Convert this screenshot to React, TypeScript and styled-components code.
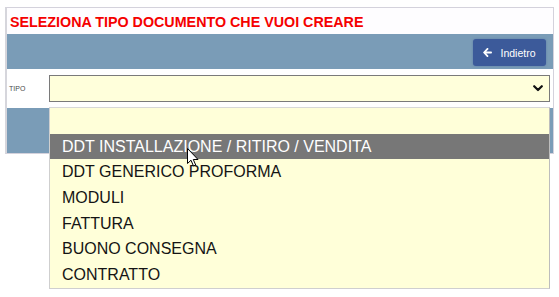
import React from "react";
import styled, { createGlobalStyle } from "styled-components";

const Global = createGlobalStyle`
  html, body { margin: 0; padding: 0; background: #ffffff; }
  body { font-family: "Liberation Sans", Arial, sans-serif; }
  * { box-sizing: border-box; }
`;

const Page = styled.div`
  position: relative;
  min-height: 297px;
  padding: 7px 5px 0 5px;
`;

const Panel = styled.div`
  position: relative;
  border: 1px solid #d4d2dc;
  border-left: 2px solid #d6d6dc;
  display: flex;
  flex-direction: column;
`;

const TitleRow = styled.div`
  height: 26px;
  display: flex;
  align-items: center;
  padding-left: 3px;
  padding-top: 2px;
  background: #fefdff;
`;

const Title = styled.h1`
  margin: 0;
  font-size: 14.3px;
  font-weight: bold;
  color: #f50000;
`;

const Toolbar = styled.div`
  height: 35px;
  background: #7a9cb7;
  display: flex;
  align-items: center;
  justify-content: flex-end;
  padding-right: 7px;
`;

const BackButton = styled.button`
  height: 27px;
  width: 73px;
  border: none;
  border-radius: 3px;
  background: #3c5a9a;
  color: #ffffff;
  font-family: "Liberation Sans", Arial, sans-serif;
  font-size: 10.5px;
  display: flex;
  align-items: center;
  justify-content: center;
  gap: 8px;
  padding: 0;
  margin-top: 2px;
  box-shadow: 0 0 2px rgba(60, 90, 154, 0.5);
`;

const FormRow = styled.div`
  height: 39px;
  background: #ffffff;
  display: flex;
  align-items: center;
  padding-right: 3px;
`;

const Label = styled.span`
  width: 42px;
  padding-left: 2px;
  font-size: 7px;
  color: #4a4a4a;
`;

const SelectWrap = styled.div`
  position: relative;
  flex: 1;
`;

const SelectBox = styled.div`
  height: 27px;
  border: 1px solid #7a7a7a;
  background: #ffffdb;
  display: flex;
  align-items: center;
  justify-content: flex-end;
  padding-right: 6px;
`;

const DropList = styled.ul`
  position: absolute;
  top: 32px;
  left: 0;
  right: 0;
  margin: 0;
  padding: 0;
  list-style: none;
  background: #ffffd9;
  border: 1px solid #cfcfcf;
  border-top-color: #d8d8d8;
  border-right-color: #bdbdbd;
  z-index: 2;
`;

const Option = styled.li<{ $active?: boolean }>`
  height: 25.7px;
  display: flex;
  align-items: center;
  padding-left: 12px;
  font-size: 16px;
  color: ${(p) => (p.$active ? "#ffffff" : "#141414")};
  background: ${(p) => (p.$active ? "#777777" : "transparent")};
`;

const BottomBar = styled.div`
  height: 45px;
  background: #7a9cb7;
`;

const Cursor = styled.svg`
  position: absolute;
  left: 187px;
  top: 148px;
  z-index: 5;
`;

const options = [
  "",
  "DDT INSTALLAZIONE / RITIRO / VENDITA",
  "DDT GENERICO PROFORMA",
  "MODULI",
  "FATTURA",
  "BUONO CONSEGNA",
  "CONTRATTO",
];

export default function App() {
  return (
    <>
      <Global />
      <Page>
        <Panel>
          <TitleRow>
            <Title>SELEZIONA TIPO DOCUMENTO CHE VUOI CREARE</Title>
          </TitleRow>
          <Toolbar>
            <BackButton>
              <svg width="9" height="9" viewBox="0 0 10 10">
                <path
                  d="M5 1 L1.2 5 L5 9 M1.5 5 H9"
                  stroke="#ffffff"
                  strokeWidth="2"
                  fill="none"
                  strokeLinecap="round"
                  strokeLinejoin="round"
                />
              </svg>
              Indietro
            </BackButton>
          </Toolbar>
          <FormRow>
            <Label>TIPO</Label>
            <SelectWrap>
              <SelectBox>
                <svg width="10" height="7" viewBox="0 0 10 7">
                  <path
                    d="M1.2 1.2 L5 5 L8.8 1.2"
                    stroke="#111"
                    strokeWidth="2.2"
                    fill="none"
                    strokeLinecap="round"
                    strokeLinejoin="round"
                  />
                </svg>
              </SelectBox>
              <DropList>
                {options.map((o, i) => (
                  <Option key={i} $active={i === 1}>
                    {o}
                  </Option>
                ))}
              </DropList>
            </SelectWrap>
          </FormRow>
          <BottomBar />
        </Panel>
        <Cursor width="12" height="19" viewBox="0 0 12 19">
          <path
            d="M0.5 0.5 L0.5 15.5 L4 12.2 L6.5 18 L8.7 17 L6.3 11.5 L11 11.5 Z"
            fill="#ffffff"
            stroke="#000000"
            strokeWidth="1"
            strokeLinejoin="miter"
          />
        </Cursor>
      </Page>
    </>
  );
}
